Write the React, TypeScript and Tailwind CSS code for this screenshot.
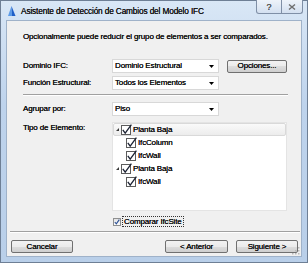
import React from "react";

const font = "font-['Liberation_Sans',Arial,sans-serif]";

function DropArrow() {
  return (
    <svg width="5" height="3" viewBox="0 0 5 3">
      <path d="M0 0h5L2.5 3z" fill="#000" />
    </svg>
  );
}

function Combo({ text }: { text: string }) {
  return (
    <div className="flex h-[14px] w-[107px] items-center justify-between border border-[#d8d8d8] bg-white pl-[2px] pr-[4px]">
      <span>{text}</span>
      <DropArrow />
    </div>
  );
}

function WinButton({ label, className = "" }: { label: string; className?: string }) {
  return (
    <div
      className={`flex h-[13px] items-center justify-center rounded-[2px] border border-[#707070] bg-[linear-gradient(#f2f2f2,#ebebeb_50%,#dddddd_50%,#cfcfcf)] ${className}`}
    >
      {label}
    </div>
  );
}

function TreeCheck() {
  return (
    <svg width="11" height="11" viewBox="0 0 11 11" className="shrink-0">
      <rect x="0.5" y="1.5" width="9" height="9" fill="#fff" stroke="#5c5c5c" />
      <path d="M1.8 5.8 L4.2 9.2 L10.4 0.6" fill="none" stroke="#1c2233" strokeWidth="1.3" />
    </svg>
  );
}

function Expander() {
  return (
    <svg width="3" height="3" viewBox="0 0 3 3" className="shrink-0">
      <path d="M3 0v3H0z" fill="#3a3a3a" />
    </svg>
  );
}

function TreeRow({
  label,
  level,
  hover = false,
}: {
  label: string;
  level: 0 | 1;
  hover?: boolean;
}) {
  return (
    <div
      className={`flex h-[13px] items-center ${
        hover
          ? "rounded-[2px] border border-[#d9d9d9] bg-[linear-gradient(#fafafa,#ececec)]"
          : "border border-transparent"
      } ${level === 0 ? "pl-[2px]" : "pl-[12px]"}`}
    >
      {level === 0 && <Expander />}
      <span className={level === 0 ? "ml-[2px]" : ""}>
        <TreeCheck />
      </span>
      <span className="ml-[1px]">{label}</span>
    </div>
  );
}

function SizeGrip() {
  const dots = [
    [6, 0],
    [6, 3],
    [3, 3],
    [6, 6],
    [3, 6],
    [0, 6],
  ];
  return (
    <svg width="8" height="8" viewBox="0 0 8 8" className="absolute bottom-[1px] right-[1px]">
      {dots.map(([x, y]) => (
        <rect key={`${x}-${y}`} x={x} y={y} width="1.5" height="1.5" fill="#b8b8b8" />
      ))}
    </svg>
  );
}

export default function App() {
  return (
    <div
      className={`${font} flex h-[263px] w-[308px] flex-col border border-[#6e7f95] bg-[linear-gradient(#d9e7f6,#bed3ec_40%,#b9cfe9)] px-[5px] pb-[5px] text-[8px] leading-[12px] tracking-[-0.15px] text-[#111] [text-shadow:0_0_0.3px_#000]`}
    >
      {/* title bar */}
      <div className="flex h-[19px] shrink-0 items-start justify-between">
        <div className="flex h-[19px] items-center">
          <svg width="9" height="10" viewBox="0 0 9 10" className="ml-[1px]">
            <path d="M1 10 L4.5 0 L5 10z" fill="#5b9be8" />
            <path d="M5 10 L4.5 0 L8.5 10z" fill="#1f5fc8" />
          </svg>
          <span className="ml-[5px] text-[8.3px] text-[#1b1b1b]">
            Asistente de Detección de Cambios del Modelo IFC
          </span>
        </div>
        <div className="-mt-px mr-[-1px] flex">
          <div className="flex h-[14px] w-[26px] items-center justify-center rounded-bl-[3px] border border-t-0 border-[#7f8fa6] bg-[linear-gradient(#eef3fa,#d3e0f0)] text-[9px] text-[#6a6a6a]">
            ?
          </div>
          <div className="flex h-[14px] w-[21px] items-center justify-center rounded-br-[3px] border border-l-0 border-t-0 border-[#7f8fa6] bg-[linear-gradient(#eef3fa,#d3e0f0)]">
            <svg width="8" height="6" viewBox="0 0 8 6">
              <path d="M1 0.5 L7 5.5 M7 0.5 L1 5.5" stroke="#6f6f6f" strokeWidth="1.4" />
            </svg>
          </div>
        </div>
      </div>

      {/* client area */}
      <div className="relative flex flex-1 flex-col border border-[#9fb2c9] bg-[#f0f0f0]">
        <div className="flex flex-col pl-[16px] pr-[13px] pt-[10px]">
          <p>Opcionalmente puede reducir el grupo de elementos a ser comparados.</p>

          <div className="mt-[16px] flex h-[14px] items-center">
            <span className="w-[89px]">Dominio IFC:</span>
            <Combo text="Dominio Estructural" />
            <WinButton label="Opciones..." className="ml-[8px] w-[60px]" />
          </div>

          <div className="mt-[3px] flex h-[14px] items-center">
            <span className="w-[89px]">Función Estructural:</span>
            <Combo text="Todos los Elementos" />
          </div>

          <div className="mt-[4px] h-[2px] border-b border-t border-b-white border-t-[#a0a0a0]" />

          <div className="mt-[6px] flex h-[14px] items-center">
            <span className="w-[89px]">Agrupar por:</span>
            <Combo text="Piso" />
          </div>

          <div className="mt-[6px] flex items-start">
            <span className="w-[89px]">Tipo de Elemento:</span>
            <div className="h-[89px] w-[175px] border border-[#e4e4e4] bg-white">
              <TreeRow label="Planta Baja" level={0} hover />
              <TreeRow label="IfcColumn" level={1} />
              <TreeRow label="IfcWall" level={1} />
              <TreeRow label="Planta Baja" level={0} />
              <TreeRow label="IfcWall" level={1} />
            </div>
          </div>

          <div className="ml-[89px] mt-[5px] flex h-[11px] items-center">
            <div className="ml-px flex h-[8px] w-[8px] items-center justify-center border border-[#8e8f8f] bg-[linear-gradient(#e3e3e3,#fbfbfb)]">
              <svg width="6" height="6" viewBox="0 0 6 6">
                <path d="M0.8 3 L2.3 4.8 L5.3 0.6" fill="none" stroke="#2b4f94" strokeWidth="1.1" />
              </svg>
            </div>
            <span className="ml-px border border-dotted border-[#333] px-px leading-[9px]">
              Comparar IfcSite
            </span>
          </div>
        </div>

        <div className="ml-[3px] mr-[1px] mt-[4px] h-[2px] border-b border-t border-b-white border-t-[#a0a0a0]" />

        <div className="mt-[7px] flex items-center pl-[4px] pr-[3px]">
          <WinButton label="Cancelar" className="w-[62px]" />
          <div className="ml-auto flex gap-[8px]">
            <WinButton label="< Anterior" className="w-[63px]" />
            <WinButton label="Siguiente >" className="w-[62px]" />
          </div>
        </div>

        <SizeGrip />
      </div>
    </div>
  );
}
